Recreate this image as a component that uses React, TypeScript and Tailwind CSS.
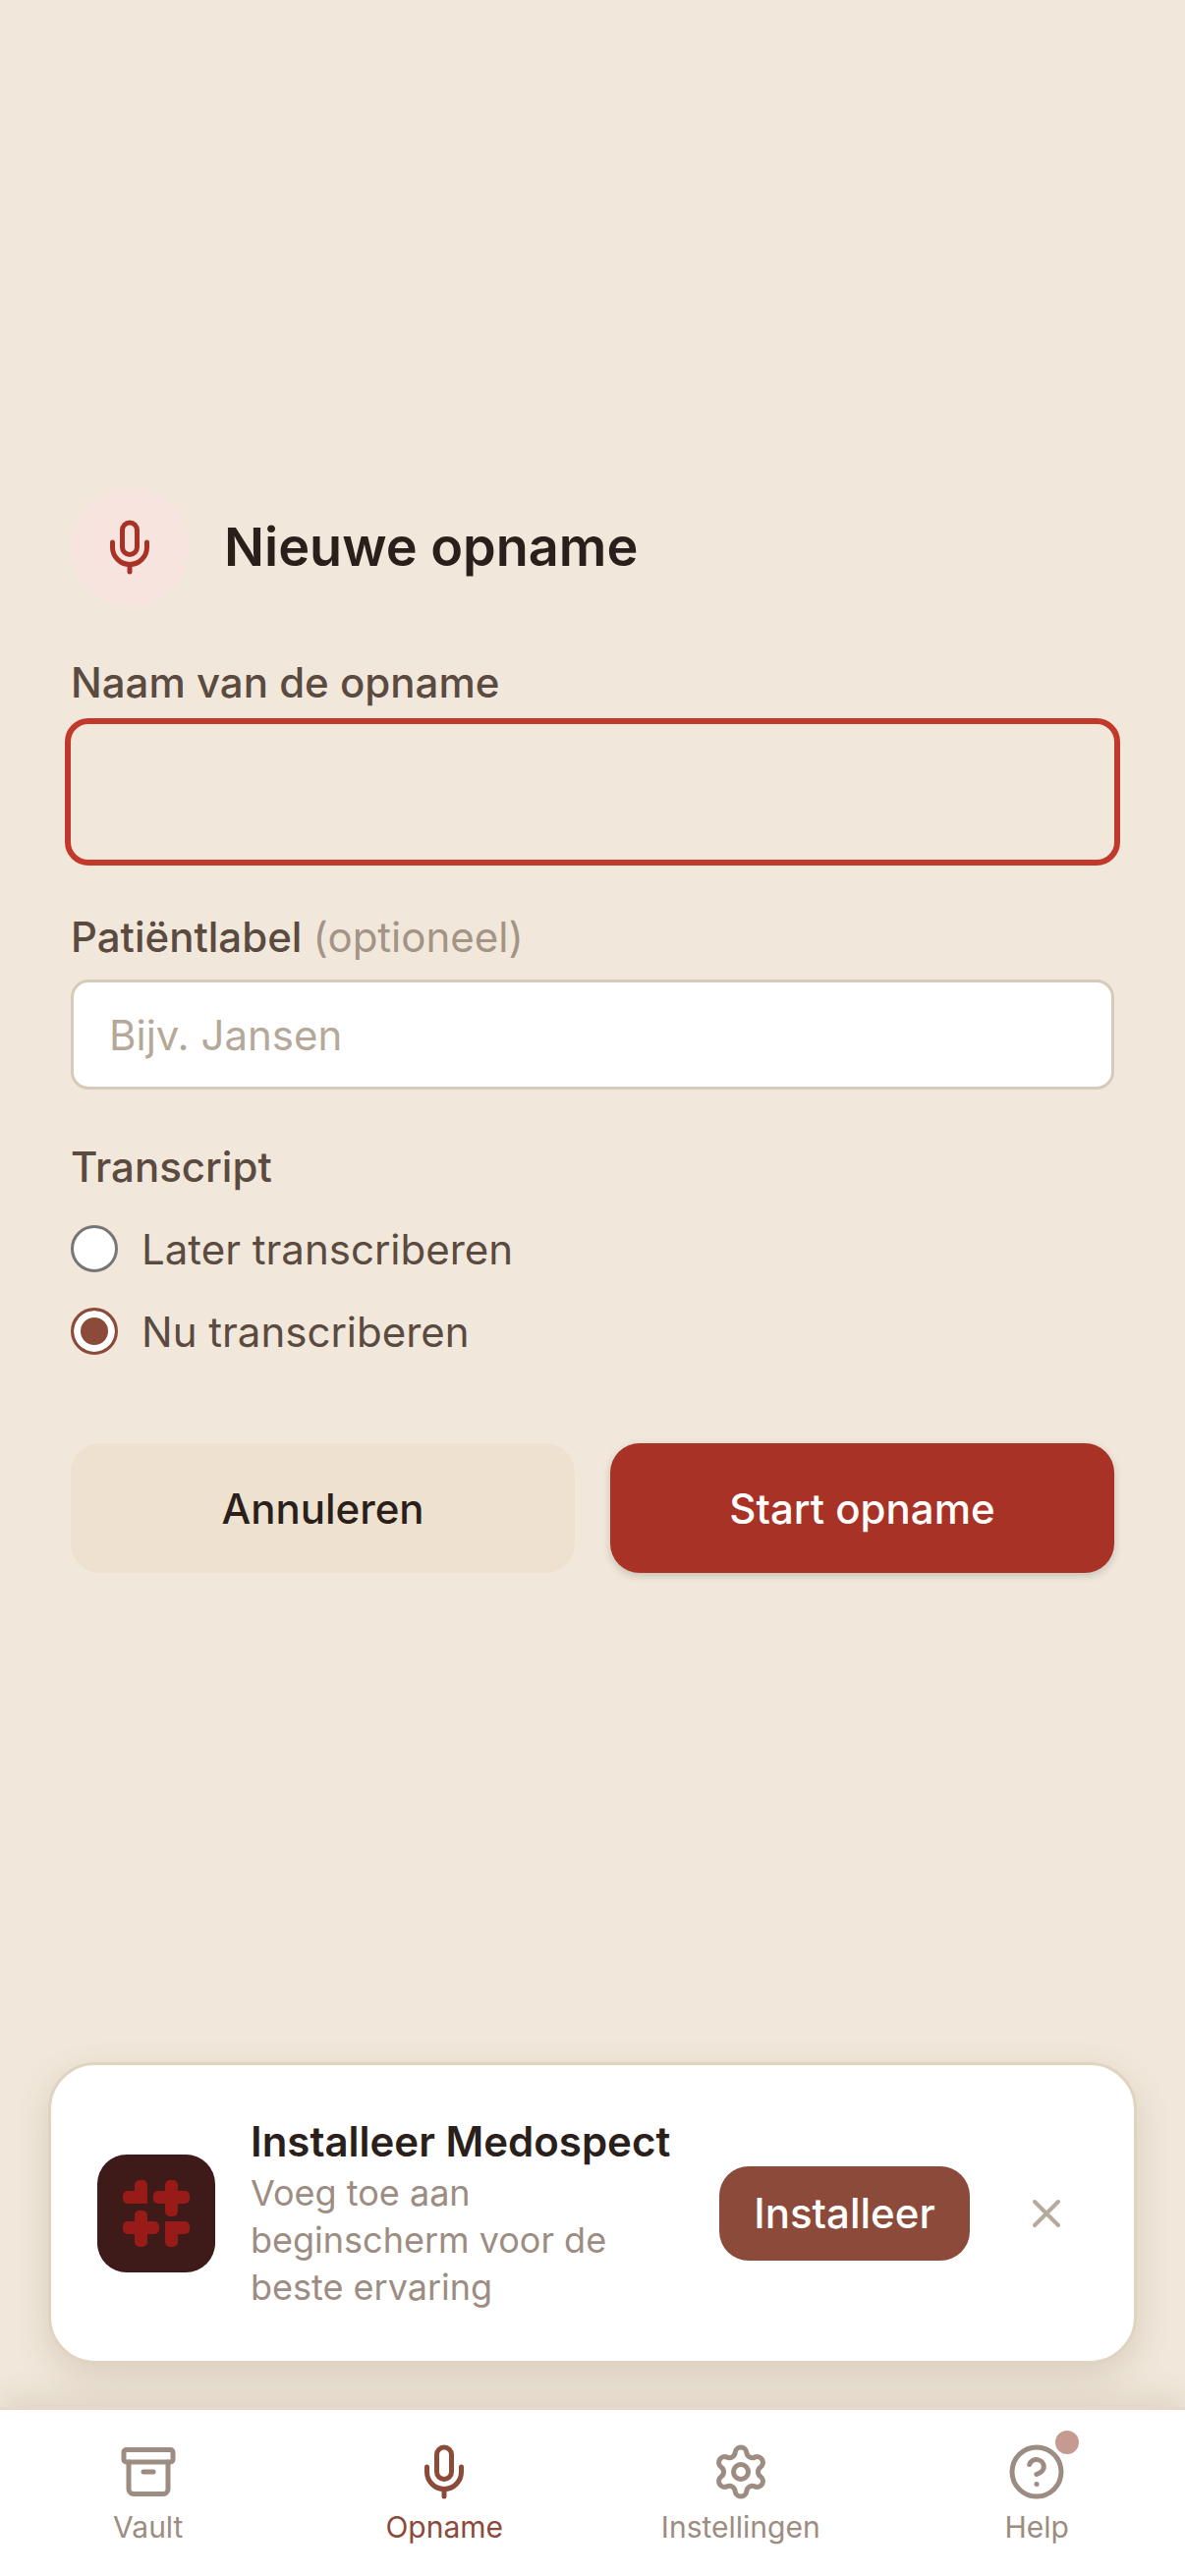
import { Archive, CircleHelp, Mic, Settings, X } from "lucide-react";

function Logo() {
  return (
    <svg width="120" height="120" viewBox="0 0 120 120" className="shrink-0">
      <rect width="120" height="120" rx="30" fill="#3e1a18" />
      <g fill="#981b18">
        <rect x="38" y="26" width="13" height="24" rx="5" />
        <rect x="26" y="37" width="25" height="13" rx="5" />
        <rect x="42" y="40" width="9" height="10" />
        <rect x="69" y="26" width="13" height="37" rx="5" />
        <rect x="57" y="37" width="37" height="13" rx="5" />
        <rect x="38" y="57" width="13" height="37" rx="5" />
        <rect x="26" y="68" width="37" height="13" rx="5" />
        <rect x="69" y="68" width="13" height="26" rx="5" />
        <rect x="69" y="68" width="25" height="13" rx="5" />
        <rect x="69" y="68" width="9" height="9" />
      </g>
    </svg>
  );
}

function Radio({ label, checked }: { label: string; checked?: boolean }) {
  return (
    <label className="flex h-[48px] items-center gap-[24px]">
      <input
        type="radio"
        name="transcript"
        defaultChecked={checked}
        className="m-0 h-[48px] w-[48px] appearance-none rounded-full border-[3px] border-[#767676] bg-white checked:border-[#8b4a3a] checked:bg-[#8b4a3a] checked:shadow-[inset_0_0_0_7px_white]"
      />
      <span className="text-[42px] text-[#5a4a3f]">{label}</span>
    </label>
  );
}

function NavItem({ label, active, badge, icon: Icon }: { label: string; active?: boolean; badge?: boolean; icon: typeof Mic }) {
  return (
    <div className={`flex flex-col items-center ${active ? "text-[#8b4a3a]" : "text-[#9c8c82]"}`}>
      <div className="relative">
        <Icon size={60} strokeWidth={2} />
        {badge && <span className="absolute -right-[13px] -top-[12px] h-[24px] w-[24px] rounded-full bg-[#c49a91]" />}
      </div>
      <span className="mt-[5px] text-[30px] leading-[42px]">{label}</span>
    </div>
  );
}

export default function App() {
  return (
    <div className="relative flex h-[2622px] w-[1206px] flex-col overflow-hidden bg-[#f1e8db] font-['Inter',sans-serif]">
      <main className="flex-1 px-[72px] pt-[497px]">
        <div className="flex items-center gap-[36px]">
          <div className="flex h-[120px] w-[120px] items-center justify-center rounded-full bg-[#f8e4df] text-[#a93226]">
            <Mic size={60} strokeWidth={2} />
          </div>
          <h1 className="text-[54px] font-semibold leading-[72px] text-[#2a1f1b]">Nieuwe opname</h1>
        </div>

        <label className="mt-[48px] block text-[42px] font-medium leading-[60px] text-[#5a4a3f]">Naam van de opname</label>
        <input className="mt-[12px] block h-[138px] w-full rounded-[18px] bg-transparent outline-[6px] outline-[#c0392b]" />

        <label className="mt-[49px] block text-[42px] font-medium leading-[60px] text-[#5a4a3f]">
          Patiëntlabel <span className="font-normal text-[#a39486]">(optioneel)</span>
        </label>
        <input
          placeholder="Bijv. Jansen"
          className="mt-[13px] block h-[112px] w-full rounded-[18px] border-[3px] border-[#d6cbb9] bg-white px-[36px] text-[42px] text-[#2a1f1b] placeholder:text-[#b5a898]"
        />

        <div className="mt-[49px] text-[42px] font-medium leading-[60px] text-[#5a4a3f]">Transcript</div>
        <div className="mt-[29px] flex flex-col gap-[36px]">
          <Radio label="Later transcriberen" />
          <Radio label="Nu transcriberen" checked />
        </div>

        <div className="mt-[90px] flex gap-[36px]">
          <button className="h-[132px] flex-1 rounded-[30px] bg-[#eee1d0] text-[42px] font-medium text-[#2a1f1b]">Annuleren</button>
          <button className="h-[132px] flex-1 rounded-[30px] bg-[#a93226] text-[42px] font-medium text-white shadow-[0_3px_9px_rgba(0,0,0,0.18)]">Start opname</button>
        </div>
      </main>

      <div className="absolute bottom-[216px] left-[49px] flex h-[307px] w-[1108px] items-center rounded-[48px] border-[3px] border-[#e0d4c1] bg-white pl-[47px] shadow-[0_12px_36px_rgba(90,60,30,0.16)]">
        <Logo />
        <div className="ml-[36px] w-[440px] shrink-0">
          <div className="text-[42px] font-semibold leading-[54px] text-[#2a1f1b]">Installeer Medospect</div>
          <p className="mt-px text-[36px] leading-[48px] text-[#9c8c82]">Voeg toe aan beginscherm voor de beste ervaring</p>
        </div>
        <button className="ml-[37px] h-[96px] w-[255px] shrink-0 rounded-[30px] bg-[#8b4a3a] text-[42px] font-medium text-white">Installeer</button>
        <X size={48} strokeWidth={2} className="ml-[54px] text-[#b5aa9c]" />
      </div>

      <nav className="grid h-[172px] shrink-0 grid-cols-4 items-start border-t-[3px] border-[#e5dac9] bg-white pt-[33px] shadow-[0_-9px_30px_rgba(90,60,30,0.12)]">
        <NavItem label="Vault" icon={Archive} />
        <NavItem label="Opname" icon={Mic} active />
        <NavItem label="Instellingen" icon={Settings} />
        <NavItem label="Help" icon={CircleHelp} badge />
      </nav>
    </div>
  );
}
